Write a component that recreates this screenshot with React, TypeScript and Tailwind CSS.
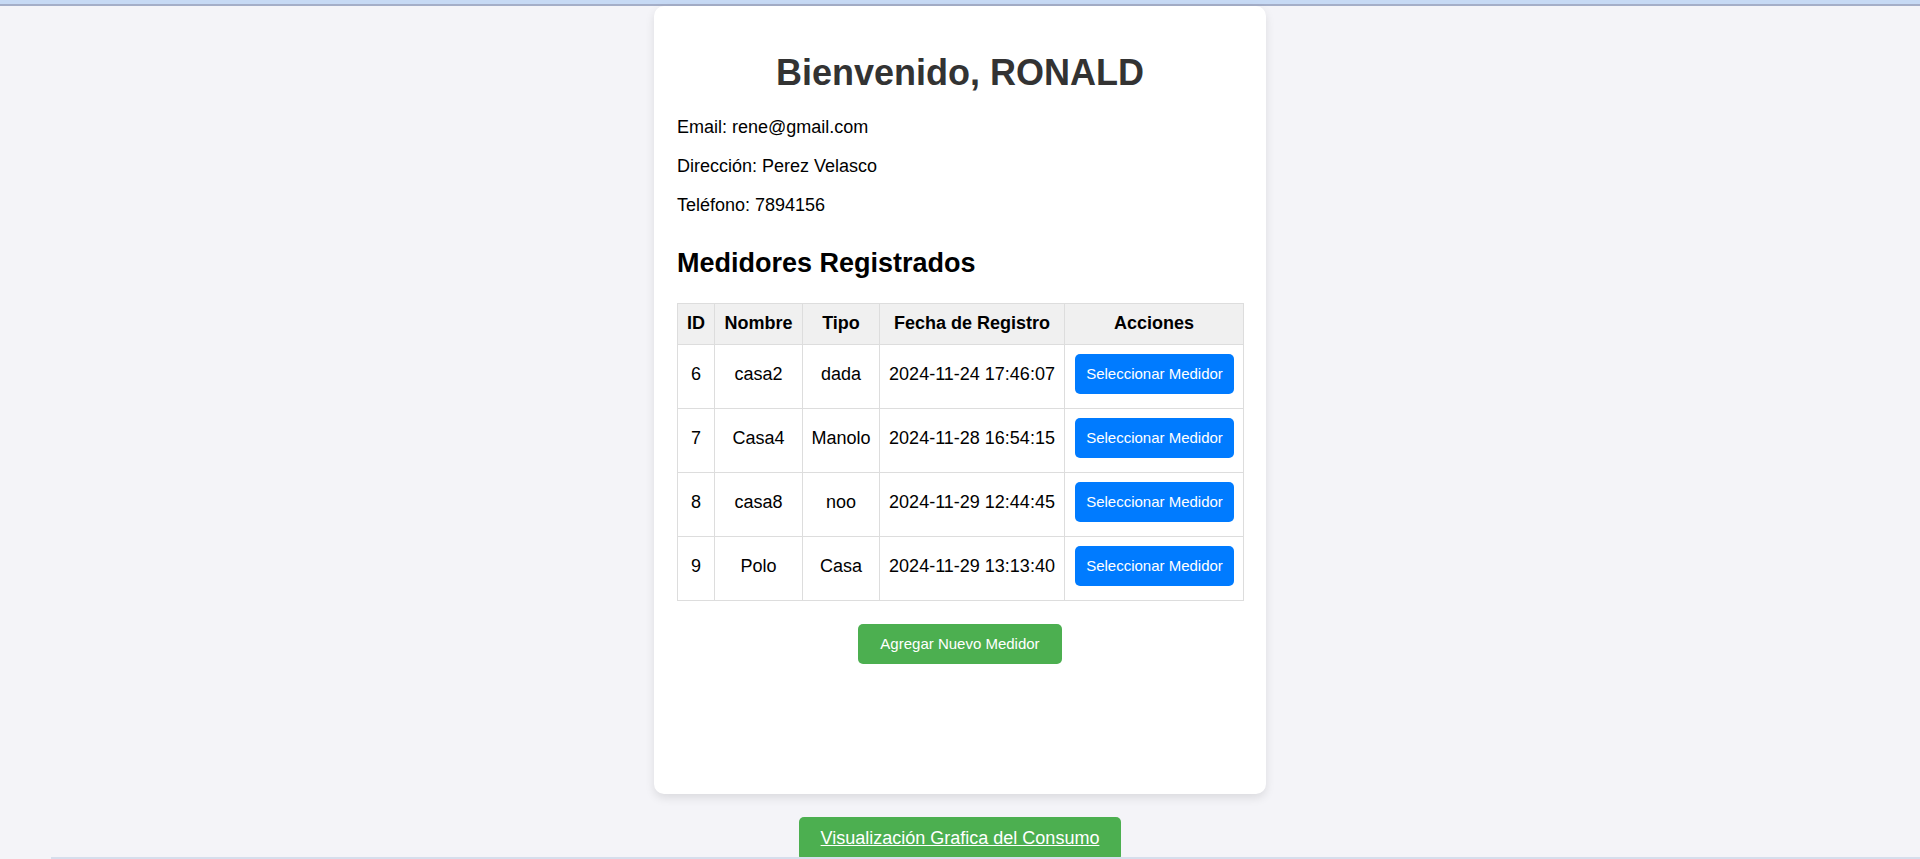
import React from "react";

const rows = [
  { id: 6, nombre: "casa2", tipo: "dada", fecha: "2024-11-24 17:46:07" },
  { id: 7, nombre: "Casa4", tipo: "Manolo", fecha: "2024-11-28 16:54:15" },
  { id: 8, nombre: "casa8", tipo: "noo", fecha: "2024-11-29 12:44:45" },
  { id: 9, nombre: "Polo", tipo: "Casa", fecha: "2024-11-29 13:13:40" },
];

export default function App() {
  return (
    <div
      className="min-h-screen bg-[#f4f4f8] text-black"
      style={{ fontFamily: '"Liberation Sans", Arial, sans-serif' }}
    >
      <div className="h-[4px] bg-[#c6d9f4]" />
      <div className="h-[2px] bg-[#a4aec8]" />
      <div className="flex flex-col items-center">
        <div className="w-[612px] h-[788px] bg-white rounded-[10px] shadow-[0_4px_10px_rgba(0,0,0,0.1)] px-[23px] pt-[46px]">
          <h1 className="text-[36px] font-bold text-[#333] text-center leading-[41px]">
            Bienvenido, RONALD
          </h1>
          <div className="mt-[24px] text-[18px] leading-[21px] flex flex-col gap-[18px]">
            <p>Email: rene@gmail.com</p>
            <p>Dirección: Perez Velasco</p>
            <p>Teléfono: 7894156</p>
          </div>
          <h2 className="mt-[32px] text-[27px] font-bold leading-[31px]">
            Medidores Registrados
          </h2>
          <table className="mt-[24px] w-[566px] table-fixed border-collapse text-[18px] text-center">
            <colgroup>
              <col className="w-[37px]" />
              <col className="w-[88px]" />
              <col className="w-[77px]" />
              <col className="w-[185px]" />
              <col className="w-[179px]" />
            </colgroup>
            <thead>
              <tr className="h-[41px] bg-[#f0f0f0]">
                {["ID", "Nombre", "Tipo", "Fecha de Registro", "Acciones"].map((h) => (
                  <th key={h} className="border border-[#dddddd] font-bold px-0 pb-[2px] whitespace-nowrap">
                    {h}
                  </th>
                ))}
              </tr>
            </thead>
            <tbody>
              {rows.map((r) => (
                <tr key={r.id} className="h-[64px]">
                  <td className="border border-[#dddddd] pb-[5px]">{r.id}</td>
                  <td className="border border-[#dddddd] pb-[5px]">{r.nombre}</td>
                  <td className="border border-[#dddddd] pb-[5px]">{r.tipo}</td>
                  <td className="border border-[#dddddd] pb-[5px] whitespace-nowrap">{r.fecha}</td>
                  <td className="border border-[#dddddd] px-[10px] pb-[5px]">
                    <button className="w-[159px] h-[40px] bg-[#007bff] text-white text-[15px] rounded-[5px] whitespace-nowrap">
                      Seleccionar Medidor
                    </button>
                  </td>
                </tr>
              ))}
            </tbody>
          </table>
          <div className="flex justify-center mt-[23px]">
            <button className="h-[40px] px-[22px] bg-[#4caf50] text-white text-[15px] rounded-[5px]">
              Agregar Nuevo Medidor
            </button>
          </div>
        </div>
        <a
          href="#"
          className="mt-[23px] bg-[#4caf50] text-white text-[18px] underline px-[22px] pt-[11px] pb-[12px] rounded-[5px] leading-[21px]"
        >
          Visualización Grafica del Consumo
        </a>
      </div>
      <div className="fixed bottom-0 left-[51px] right-0 h-[2px] bg-[#d6deec]" />
    </div>
  );
}
